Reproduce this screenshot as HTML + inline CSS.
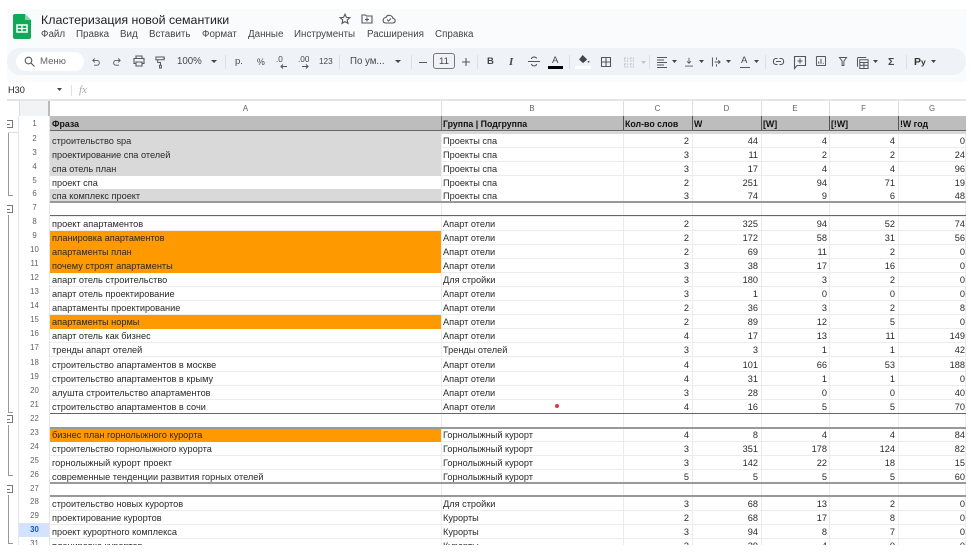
<!DOCTYPE html>
<html lang="ru"><head><meta charset="utf-8">
<style>
html,body{margin:0;padding:0;background:#fff;}
body{width:973px;height:552px;position:relative;overflow:hidden;font-family:"Liberation Sans",sans-serif;color:#222;}
#app{position:absolute;left:7px;top:9px;width:959px;height:536px;background:#f9fbfd;overflow:hidden}
.abs{position:absolute;white-space:nowrap}
.t{position:absolute;white-space:nowrap;color:#444746;font-size:10px;line-height:14px}
svg{position:absolute;overflow:visible;filter:blur(.3px)}
.i{fill:none;stroke:#55585a;stroke-width:1.1}
.sep{position:absolute;top:55px;width:1px;height:14px;background:#dcdfe3}
#grid{position:absolute;left:0;top:0;width:973px;height:552px;font-size:9.2px;overflow:hidden;clip-path:inset(100px 7px 7px 18px);filter:blur(.3px)}
.r{position:absolute;left:19px;width:947px;height:14px;line-height:14px;border-bottom:1px solid #ececec;box-sizing:border-box;background:#fff;color:#2a2a2a}
.r span{position:absolute;top:0;height:14px;white-space:nowrap;overflow:hidden;box-sizing:border-box;border-right:1px solid #ececec}
.r span.n{top:-2px;left:0;width:31px;text-align:center;background:#fff;color:#5f6368;font-size:7.8px;border-right:0}
.a{left:31px;width:392px;padding-left:2px}
.b{left:422px;width:183px;padding-left:2px}
.c{left:604px;width:70px;text-align:right;padding-right:3px}
.d{left:673px;width:70px;text-align:right;padding-right:3px}
.e{left:742px;width:69px;text-align:right;padding-right:2px}
.f{left:810px;width:70px;text-align:right;padding-right:3px}
.g{left:879px;width:68px;text-align:right;padding-right:0}
.gr .a{background:#d9d9d9}
.or .a{background:#ff9900}
.hl{position:absolute;left:50px;width:916px;height:1px;background:#666}
.hl2{position:absolute;left:50px;width:916px;height:2px;background:#999}
</style></head><body>
<div id="app">
<div class="abs" style="left:0;top:73px;width:959px;height:18px;background:#fff"></div>
<div class="abs" style="left:0;top:39px;width:959px;height:27px;background:#eff3f8;border-radius:13px"></div>
</div>

<!-- logo -->
<svg style="left:13px;top:14px" width="18" height="25" viewBox="0 0 18 25"><path d="M2 0H12L18 6V23a2 2 0 0 1-2 2H2a2 2 0 0 1-2-2V2a2 2 0 0 1 2-2Z" fill="#0fa958"/><path d="M12 0L18 6H12Z" fill="#8ed1ae"/><path d="M4 11H14V18H4Z" fill="none" stroke="#fff" stroke-width="1.5"/><path d="M4 14.500H14M9 11V18" stroke="#fff" stroke-width="1.3"/></svg>

<div class="t" style="left:41px;top:13px;font-size:12.4px;color:#1f1f1f">Кластеризация новой семантики</div>
<svg style="left:339px;top:13px" width="12" height="12" viewBox="0 0 12 12"><path class="i" d="M6 1.200L7.400 4.400L10.900 4.700L8.200 7L9 10.400L6 8.600L3 10.400L3.800 7L1.100 4.700L4.600 4.400Z"/></svg>
<svg style="left:361px;top:14px" width="12" height="10" viewBox="0 0 12 10"><path class="i" d="M1 1H4.500L5.500 2H11V9H1ZM6 3.500V7.500M4 5.500H8"/></svg>
<svg style="left:382px;top:14px" width="14" height="10" viewBox="0 0 14 10"><path class="i" d="M3.500 9H10.500C14 9 14 4.500 11 4.500C10 .5 5 .5 4 3.500C.5 3.500 0 9 3.500 9Z M5 5.500L6.500 7L9 4.500"/></svg>

<div class="t" style="left:41px;top:28px;font-size:9.8px">Файл</div>
<div class="t" style="left:76px;top:28px;font-size:9.8px">Правка</div>
<div class="t" style="left:120px;top:28px;font-size:9.8px">Вид</div>
<div class="t" style="left:149px;top:28px;font-size:9.8px">Вставить</div>
<div class="t" style="left:202px;top:28px;font-size:9.8px">Формат</div>
<div class="t" style="left:248px;top:28px;font-size:9.8px">Данные</div>
<div class="t" style="left:294px;top:28px;font-size:9.8px">Инструменты</div>
<div class="t" style="left:367px;top:28px;font-size:9.8px">Расширения</div>
<div class="t" style="left:435px;top:28px;font-size:9.8px">Справка</div>

<!-- toolbar -->
<div class="abs" style="left:16px;top:52px;width:68px;height:19px;background:#fff;border-radius:10px"></div>
<svg style="left:24px;top:56px" width="11" height="11" viewBox="0 0 11 11"><circle class="i" cx="4.500" cy="4.500" r="3.300"/><path class="i" d="M7 7L10.500 10.500"/></svg>
<div class="t" style="left:40px;top:55px;font-size:9.6px;color:#666">Меню</div>
<svg style="left:92px;top:58px" width="8" height="8" viewBox="0 0 10 10"><path class="i" d="M3.500 .5L1 3L3.500 5.500M1 3H6.500C10 3 10 9 6.500 9H2.500"/></svg>
<svg style="left:113px;top:58px" width="8" height="8" viewBox="0 0 10 10"><path class="i" d="M6.500 .5L9 3L6.500 5.500M9 3H3.500C0 3 0 9 3.500 9H7.500"/></svg>
<svg style="left:133px;top:55px" width="12" height="12" viewBox="0 0 12 12"><path class="i" d="M3 3.500V1H9V3.500M3 8.500H1V3.500H11V8.500H9M3 7H9V11H3Z"/></svg>
<svg style="left:155px;top:56px" width="10" height="13" viewBox="0 0 11 14"><path class="i" d="M1 1H10V4H1ZM10 2.500H11M3 4V7H6V10M5 10H7V13H5Z"/></svg>
<div class="t" style="left:177px;top:55px;font-size:9.700px">100%</div>
<svg style="left:211px;top:60px" width="6" height="4"><path d="M0 0H6L3 3Z" fill="#444746"/></svg>
<div class="sep" style="left:225px"></div>
<div class="t" style="left:235px;top:55px;font-size:9.500px">р.</div>
<div class="t" style="left:257px;top:55px;font-size:8.800px">%</div>
<div class="t" style="left:276px;top:53px;font-size:8.200px">.0</div>
<svg style="left:280px;top:64px" width="7" height="5"><path class="i" stroke-width="1" d="M7 2.500H1M3 .5L1 2.500L3 4.500"/></svg>
<div class="t" style="left:298px;top:53px;font-size:8.200px">.00</div>
<svg style="left:302px;top:64px" width="7" height="5"><path class="i" stroke-width="1" d="M0 2.500H6M4 .5L6 2.500L4 4.500"/></svg>
<div class="t" style="left:319px;top:55px;font-size:8.200px">123</div>
<div class="sep" style="left:339px"></div>
<div class="t" style="left:350px;top:55px;font-size:9.700px">По ум...</div>
<svg style="left:395px;top:60px" width="6" height="4"><path d="M0 0H6L3 3Z" fill="#444746"/></svg>
<div class="sep" style="left:411px"></div>
<div class="abs" style="left:419px;top:62px;width:8px;height:1px;background:#55585a"></div>
<div class="abs t" style="left:433px;top:53px;width:22px;height:16px;line-height:15px;box-sizing:border-box;border:1px solid #777;border-radius:3px;text-align:center;font-size:9.600px">11</div>
<svg style="left:462px;top:58px" width="8" height="8"><path class="i" d="M4 0V8M0 4H8"/></svg>
<div class="sep" style="left:477px"></div>
<div class="t" style="left:487px;top:55px;font-weight:bold;font-size:9.500px">B</div>
<div class="t" style="left:509px;top:55px;font-family:'Liberation Serif',serif;font-weight:bold;font-style:italic;font-size:11px">I</div>
<svg style="left:528px;top:56px" width="12" height="11" viewBox="0 0 12 11"><path class="i" d="M0 5.500H12M3.500 3C3.500 .5 8.500 .5 8.500 2.500M3.500 8C4 10.500 8.500 10.500 8.500 8"/></svg>
<div class="t" style="left:552px;top:54px;font-size:9.600px">A</div>
<div class="abs" style="left:548px;top:66px;width:15px;height:2.500px;background:#000"></div>
<div class="sep" style="left:569px"></div>
<svg style="left:578px;top:55px" width="12" height="9" viewBox="0 0 13 10"><path d="M5 0L10 5L5.500 9L1 5Z" fill="#444746"/><circle cx="11.500" cy="7.500" r="1" fill="#444746"/></svg>
<div class="abs" style="left:575px;top:66px;width:16px;height:2.500px;background:#fff"></div>
<svg style="left:601px;top:57px" width="10" height="10" viewBox="0 0 10 10"><path class="i" d="M.5 .5H9.500V9.500H.5ZM5 .5V9.500M.5 5H9.500"/></svg>
<svg style="left:624px;top:57px" width="10" height="11" viewBox="0 0 11 11"><path fill="none" stroke="#c2c5c9" stroke-width="1.100" stroke-dasharray="2 1" d="M.5 .5H4V4H.5ZM7 .5H10.500V4H7ZM.5 7H4V10.500H.5ZM7 7H10.500V10.500H7Z"/></svg>
<svg style="left:641px;top:61px" width="5" height="4"><path d="M0 0H5L2.500 3Z" fill="#c2c5c9"/></svg>
<div class="sep" style="left:649px"></div>
<svg style="left:657px;top:57px" width="10" height="11" viewBox="0 0 10 11"><path class="i" stroke-width="1" d="M0 .5H10M0 3H7M0 5.500H10M0 8H7M0 10.500H10"/></svg>
<svg style="left:672px;top:60px" width="6" height="4"><path d="M0 0H5L2.500 3Z" fill="#444746"/></svg>
<svg style="left:685px;top:57px" width="8" height="11" viewBox="0 0 10 12"><path class="i" d="M5 0V7M2.500 4.500L5 7L7.500 4.500M0 10.500H10"/></svg>
<svg style="left:699px;top:60px" width="6" height="4"><path d="M0 0H5L2.500 3Z" fill="#444746"/></svg>
<svg style="left:712px;top:57px" width="9" height="10" viewBox="0 0 10 10"><path class="i" d="M.5 0V10M5 0V2.500M5 7.500V10M3 5H9M7 3L9 5L7 7"/></svg>
<svg style="left:726px;top:60px" width="6" height="4"><path d="M0 0H5L2.500 3Z" fill="#444746"/></svg>
<div class="t" style="left:741px;top:54px;font-size:9.600px">A</div>
<div class="abs" style="left:740px;top:67px;width:10px;height:1px;background:#55585a"></div>
<svg style="left:754px;top:60px" width="6" height="4"><path d="M0 0H5L2.500 3Z" fill="#444746"/></svg>
<div class="sep" style="left:765px"></div>
<svg style="left:773px;top:58px" width="11" height="7" viewBox="0 0 11 7"><path class="i" d="M4.500 .5H3C-.5 .5 -.5 6.500 3 6.500H4.500M6.500 .5H8C11.500 .5 11.500 6.500 8 6.500H6.500M3 3.500H8"/></svg>
<svg style="left:794px;top:56px" width="12" height="13" viewBox="0 0 12 13"><path class="i" d="M.5 .5H11.500V9.500H3L.5 12.500ZM6 2.500V7.500M3.500 5H8.500"/></svg>
<svg style="left:816px;top:56px" width="10" height="10" viewBox="0 0 11 11"><path class="i" d="M1 .5H10A.5 .5 0 0 1 10.500 1V10A.5 .5 0 0 1 10 10.500H1A.5 .5 0 0 1 .5 10V1A.5 .5 0 0 1 1 .5ZM3 8.500V6M5.500 8.500V3M8 8.500V7.500"/></svg>
<svg style="left:839px;top:57px" width="8" height="9" viewBox="0 0 9 10"><path class="i" d="M.5 .5H8.500L5.500 4.500V9.500H3.500V4.500Z"/></svg>
<svg style="left:857px;top:57px" width="12" height="12" viewBox="0 0 13 13"><path class="i" d="M.5 1V10.500M.5 .5H10M3 3H12V12.500H3ZM3 6H12M3 9H12M7.500 6V12.500"/></svg>
<svg style="left:873px;top:60px" width="6" height="4"><path d="M0 0H5L2.500 3Z" fill="#444746"/></svg>
<div class="t" style="left:888px;top:55px;font-size:10.500px;font-weight:bold">Σ</div>
<div class="sep" style="left:906px"></div>
<div class="t" style="left:914px;top:55px;font-size:10.500px;font-weight:bold;color:#333">Р<span style="font-size:8.500px">у</span></div>
<svg style="left:931px;top:60px" width="6" height="4"><path d="M0 0H5L2.500 3Z" fill="#444746"/></svg>

<!-- formula bar -->
<div class="t" style="left:8px;top:83px;font-size:9.200px;color:#222">Н30</div>
<svg style="left:57px;top:88px" width="6" height="4"><path d="M0 0H5L2.500 3Z" fill="#444746"/></svg>
<div class="abs" style="left:71px;top:85px;width:1px;height:11px;background:#e0e0e0"></div>
<div class="t" style="left:79px;top:83px;font-size:11px;font-style:italic;font-family:'Liberation Serif',serif;color:#aaa">fx</div>
<div class="abs" style="left:7px;top:99px;width:959px;height:2px;background:#e4e5e7"></div>

<!-- group gutter -->
<div class="abs" style="left:7px;top:101px;width:12px;height:444px;background:#fff"></div>
<div class="abs" style="left:8px;top:132px;width:11px;height:1px;background:#ddd"></div>
<div class="abs" style="left:7px;top:120px;width:6px;height:8px;border:1px solid #777;border-left:0;box-sizing:border-box"></div>
<div class="abs" style="left:7px;top:123.500px;width:3px;height:1px;background:#777"></div>
<div class="abs" style="left:8px;top:133px;width:1px;height:62px;background:#999"></div><div class="abs" style="left:8px;top:195px;width:5px;height:1px;background:#999"></div>
<div class="abs" style="left:7px;top:205px;width:6px;height:8px;border:1px solid #777;border-left:0;box-sizing:border-box"></div>
<div class="abs" style="left:7px;top:208.500px;width:3px;height:1px;background:#777"></div>
<div class="abs" style="left:8px;top:215px;width:1px;height:197px;background:#999"></div><div class="abs" style="left:8px;top:412px;width:5px;height:1px;background:#999"></div>
<div class="abs" style="left:7px;top:415px;width:6px;height:8px;border:1px solid #777;border-left:0;box-sizing:border-box"></div>
<div class="abs" style="left:7px;top:418.500px;width:3px;height:1px;background:#777"></div>
<div class="abs" style="left:8px;top:425px;width:1px;height:50px;background:#999"></div><div class="abs" style="left:8px;top:475px;width:5px;height:1px;background:#999"></div>
<div class="abs" style="left:7px;top:485px;width:6px;height:8px;border:1px solid #777;border-left:0;box-sizing:border-box"></div>
<div class="abs" style="left:7px;top:488.500px;width:3px;height:1px;background:#777"></div>
<div class="abs" style="left:8px;top:495px;width:1px;height:48px;background:#999"></div><div class="abs" style="left:8px;top:543px;width:5px;height:1px;background:#999"></div>

<div id="grid">
<!-- rows -->
<div class="r gr" style="top:134px"><span class="n">2</span><span class="a">строительство spa</span><span class="b">Проекты спа</span><span class="c">2</span><span class="d">44</span><span class="e">4</span><span class="f">4</span><span class="g">0</span></div>
<div class="r gr" style="top:148px"><span class="n">3</span><span class="a">проектирование спа отелей</span><span class="b">Проекты спа</span><span class="c">3</span><span class="d">11</span><span class="e">2</span><span class="f">2</span><span class="g">24</span></div>
<div class="r gr" style="top:162px"><span class="n">4</span><span class="a">спа отель план</span><span class="b">Проекты спа</span><span class="c">3</span><span class="d">17</span><span class="e">4</span><span class="f">4</span><span class="g">96</span></div>
<div class="r" style="top:176px"><span class="n">5</span><span class="a">проект спа</span><span class="b">Проекты спа</span><span class="c">2</span><span class="d">251</span><span class="e">94</span><span class="f">71</span><span class="g">19</span></div>
<div class="r gr" style="top:189px"><span class="n">6</span><span class="a">спа комплекс проект</span><span class="b">Проекты спа</span><span class="c">3</span><span class="d">74</span><span class="e">9</span><span class="f">6</span><span class="g">48</span></div>
<div class="r" style="top:203px"><span class="n">7</span><span class="a"></span><span class="b"></span><span class="c"></span><span class="d"></span><span class="e"></span><span class="f"></span><span class="g"></span></div>
<div class="r" style="top:217px"><span class="n">8</span><span class="a">проект апартаментов</span><span class="b">Апарт отели</span><span class="c">2</span><span class="d">325</span><span class="e">94</span><span class="f">52</span><span class="g">74</span></div>
<div class="r or" style="top:231px"><span class="n">9</span><span class="a">планировка апартаментов</span><span class="b">Апарт отели</span><span class="c">2</span><span class="d">172</span><span class="e">58</span><span class="f">31</span><span class="g">56</span></div>
<div class="r or" style="top:245px"><span class="n">10</span><span class="a">апартаменты план</span><span class="b">Апарт отели</span><span class="c">2</span><span class="d">69</span><span class="e">11</span><span class="f">2</span><span class="g">0</span></div>
<div class="r or" style="top:259px"><span class="n">11</span><span class="a">почему строят апартаменты</span><span class="b">Апарт отели</span><span class="c">3</span><span class="d">38</span><span class="e">17</span><span class="f">16</span><span class="g">0</span></div>
<div class="r" style="top:273px"><span class="n">12</span><span class="a">апарт отель строительство</span><span class="b">Для стройки</span><span class="c">3</span><span class="d">180</span><span class="e">3</span><span class="f">2</span><span class="g">0</span></div>
<div class="r" style="top:287px"><span class="n">13</span><span class="a">апарт отель проектирование</span><span class="b">Апарт отели</span><span class="c">3</span><span class="d">1</span><span class="e">0</span><span class="f">0</span><span class="g">0</span></div>
<div class="r" style="top:301px"><span class="n">14</span><span class="a">апартаменты проектирование</span><span class="b">Апарт отели</span><span class="c">2</span><span class="d">36</span><span class="e">3</span><span class="f">2</span><span class="g">8</span></div>
<div class="r or" style="top:315px"><span class="n">15</span><span class="a">апартаменты нормы</span><span class="b">Апарт отели</span><span class="c">2</span><span class="d">89</span><span class="e">12</span><span class="f">5</span><span class="g">0</span></div>
<div class="r" style="top:329px"><span class="n">16</span><span class="a">апарт отель как бизнес</span><span class="b">Апарт отели</span><span class="c">4</span><span class="d">17</span><span class="e">13</span><span class="f">11</span><span class="g">149</span></div>
<div class="r" style="top:343px"><span class="n">17</span><span class="a">тренды апарт отелей</span><span class="b">Тренды отелей</span><span class="c">3</span><span class="d">3</span><span class="e">1</span><span class="f">1</span><span class="g">42</span></div>
<div class="r" style="top:358px"><span class="n">18</span><span class="a">строительство апартаментов в москве</span><span class="b">Апарт отели</span><span class="c">4</span><span class="d">101</span><span class="e">66</span><span class="f">53</span><span class="g">188</span></div>
<div class="r" style="top:372px"><span class="n">19</span><span class="a">строительство апартаментов в крыму</span><span class="b">Апарт отели</span><span class="c">4</span><span class="d">31</span><span class="e">1</span><span class="f">1</span><span class="g">0</span></div>
<div class="r" style="top:386px"><span class="n">20</span><span class="a">алушта строительство апартаментов</span><span class="b">Апарт отели</span><span class="c">3</span><span class="d">28</span><span class="e">0</span><span class="f">0</span><span class="g">40</span></div>
<div class="r" style="top:400px"><span class="n">21</span><span class="a">строительство апартаментов в сочи</span><span class="b">Апарт отели</span><span class="c">4</span><span class="d">16</span><span class="e">5</span><span class="f">5</span><span class="g">70</span></div>
<div class="r" style="top:414px"><span class="n">22</span><span class="a"></span><span class="b"></span><span class="c"></span><span class="d"></span><span class="e"></span><span class="f"></span><span class="g"></span></div>
<div class="r or" style="top:428px"><span class="n">23</span><span class="a">бизнес план горнолыжного курорта</span><span class="b">Горнолыжный курорт</span><span class="c">4</span><span class="d">8</span><span class="e">4</span><span class="f">4</span><span class="g">84</span></div>
<div class="r" style="top:442px"><span class="n">24</span><span class="a">строительство горнолыжного курорта</span><span class="b">Горнолыжный курорт</span><span class="c">3</span><span class="d">351</span><span class="e">178</span><span class="f">124</span><span class="g">82</span></div>
<div class="r" style="top:456px"><span class="n">25</span><span class="a">горнолыжный курорт проект</span><span class="b">Горнолыжный курорт</span><span class="c">3</span><span class="d">142</span><span class="e">22</span><span class="f">18</span><span class="g">15</span></div>
<div class="r" style="top:470px"><span class="n">26</span><span class="a">современные тенденции развития горных отелей</span><span class="b">Горнолыжный курорт</span><span class="c">5</span><span class="d">5</span><span class="e">5</span><span class="f">5</span><span class="g">60</span></div>
<div class="r" style="top:484px"><span class="n">27</span><span class="a"></span><span class="b"></span><span class="c"></span><span class="d"></span><span class="e"></span><span class="f"></span><span class="g"></span></div>
<div class="r" style="top:497px"><span class="n">28</span><span class="a">строительство новых курортов</span><span class="b">Для стройки</span><span class="c">3</span><span class="d">68</span><span class="e">13</span><span class="f">2</span><span class="g">0</span></div>
<div class="r" style="top:511px"><span class="n">29</span><span class="a">проектирование курортов</span><span class="b">Курорты</span><span class="c">2</span><span class="d">68</span><span class="e">17</span><span class="f">8</span><span class="g">0</span></div>
<div class="r" style="top:525px"><span class="n" style="background:#d3e3fd;color:#0b57d0;font-weight:bold">30</span><span class="a">проект курортного комплекса</span><span class="b">Курорты</span><span class="c">3</span><span class="d">94</span><span class="e">8</span><span class="f">7</span><span class="g">0</span></div>
<div class="r" style="top:539px"><span class="n">31</span><span class="a">планировка курортов</span><span class="b">Курорты</span><span class="c">3</span><span class="d">39</span><span class="e">4</span><span class="f">0</span><span class="g">0</span></div>

<div class="abs" style="left:50px;top:131px;width:916px;height:3px;background:#d9d9d9"></div>
<div class="abs" style="left:19px;top:131px;width:31px;height:3px;background:#fff"></div>

<!-- column headers -->
<div class="abs" style="left:19px;top:101px;width:947px;height:15px;background:#fff;color:#5f6368;font-size:7.800px;line-height:15px">
<span class="abs" style="left:0;width:31px;height:15px;background:#f1f3f4;border-right:2px solid #bbb;border-left:1px solid #ddd;box-sizing:border-box"></span>
<span class="abs" style="left:31px;width:392px;text-align:center;border-right:1px solid #ddd;height:15px;box-sizing:border-box">A</span>
<span class="abs" style="left:422px;width:183px;text-align:center;border-right:1px solid #ddd;height:15px;box-sizing:border-box">B</span>
<span class="abs" style="left:604px;width:70px;text-align:center;border-right:1px solid #ddd;height:15px;box-sizing:border-box">C</span>
<span class="abs" style="left:673px;width:70px;text-align:center;border-right:1px solid #ddd;height:15px;box-sizing:border-box">D</span>
<span class="abs" style="left:742px;width:69px;text-align:center;border-right:1px solid #ddd;height:15px;box-sizing:border-box">E</span>
<span class="abs" style="left:810px;width:70px;text-align:center;border-right:1px solid #ddd;height:15px;box-sizing:border-box">F</span>
<span class="abs" style="left:879px;width:68px;text-align:center">G</span>
</div>

<!-- header row -->
<div class="abs" style="left:19px;top:116px;width:31px;height:15px;background:#fff;color:#5f6368;font-size:7.800px;line-height:15px;text-align:center">1</div>
<div class="abs" style="left:50px;top:116px;width:916px;height:15px;background:#bdbdbd;font-weight:bold;font-size:8.800px;line-height:16px;color:#111">
<span class="abs" style="left:2px">Фраза</span>
<span class="abs" style="left:391px;height:15px;width:1px;background:#777"></span><span class="abs" style="left:393px">Группа | Подгруппа</span>
<span class="abs" style="left:573px;height:15px;width:1px;background:#555"></span><span class="abs" style="left:575px">Кол-во слов</span>
<span class="abs" style="left:642px;height:15px;width:1px;background:#555"></span><span class="abs" style="left:644px">W</span>
<span class="abs" style="left:711px;height:15px;width:1px;background:#555"></span><span class="abs" style="left:713px">[W]</span>
<span class="abs" style="left:779px;height:15px;width:1px;background:#555"></span><span class="abs" style="left:781px">[!W]</span>
<span class="abs" style="left:848px;height:15px;width:1px;background:#555"></span><span class="abs" style="left:850px">!W год</span>
</div>
<div class="abs" style="left:50px;top:130px;width:916px;height:1px;background:#666"></div>

<div class="hl2" style="top:201px"></div>
<div class="hl" style="top:215px"></div>
<div class="hl" style="top:413px"></div>
<div class="hl2" style="top:427px"></div>
<div class="hl2" style="top:482px"></div>
<div class="hl2" style="top:495px"></div>
<div class="abs" style="left:555px;top:404px;width:4px;height:4px;border-radius:50%;background:#e53935"></div>
<div class="abs" style="left:18px;top:116px;width:1px;height:430px;background:#e6e6e6"></div>
<div class="abs" style="left:49px;top:116px;width:1px;height:430px;background:#e6e6e6"></div>
</div>
</body></html>
